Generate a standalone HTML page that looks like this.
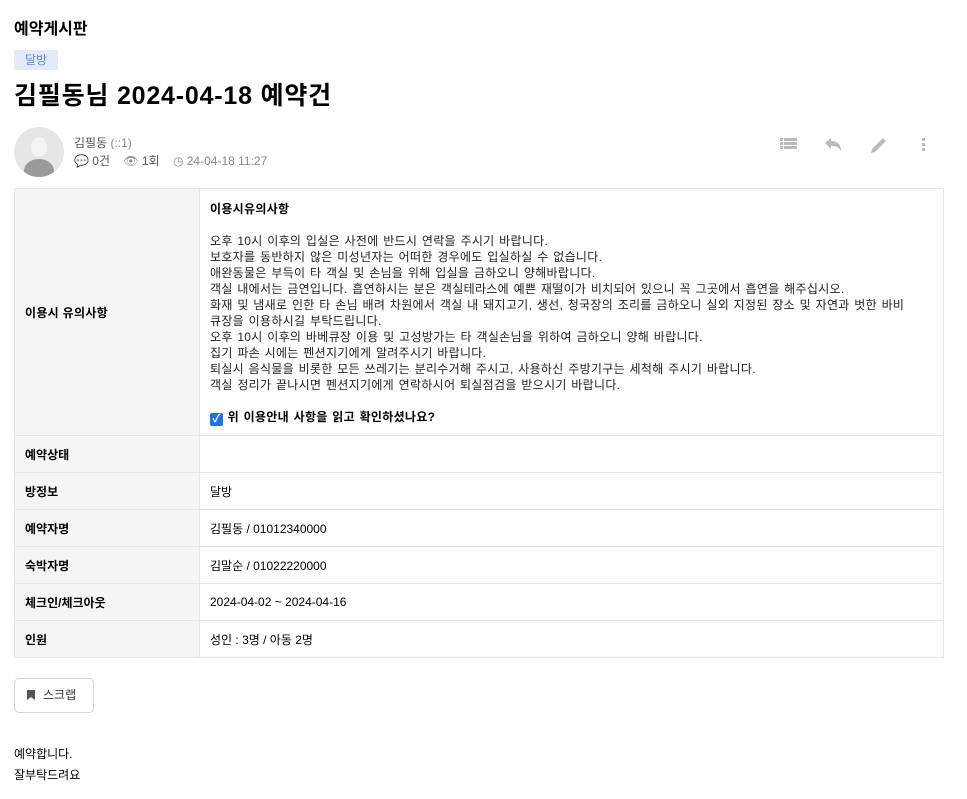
<!DOCTYPE html>
<html><head><meta charset="utf-8"><style>
*{box-sizing:border-box;margin:0;padding:0}
body{width:967px;height:799px;background:#fff;font-family:"Liberation Sans","Noto Sans CJK KR",sans-serif;color:#000;font-size:12px;position:relative;overflow:hidden}
.abs{position:absolute}
table{position:absolute;left:14px;top:188px;width:930px;border-collapse:collapse}
td{border:1px solid #e5e5e5;padding:0 10px;font-size:12px;height:37px}
td.l{background:#f5f5f5;font-weight:bold;width:185px}
.c{line-height:16px;padding:10px 10px 8px 10px;color:#222;letter-spacing:0.3px;word-spacing:1px}
</style></head><body>
<div class="abs" style="left:14px;top:15px;font-size:16px;font-weight:bold">예약게시판</div>
<div class="abs" style="left:14px;top:50px;width:44px;height:20px;background:#e3ebf8;border-radius:3px;color:#5f88d6;font-size:12px;text-align:center;line-height:20px">달방</div>
<div class="abs" style="left:14px;top:76px;font-size:25px;font-weight:bold;letter-spacing:0.8px">김필동님 2024-04-18 예약건</div>
<div class="abs" style="left:14px;top:127px;width:50px;height:50px;border-radius:50%;background:#e6e6e6;overflow:hidden">
<div class="abs" style="left:17px;top:10px;width:16px;height:20px;border-radius:50%;background:#f4f4f4"></div>
<div class="abs" style="left:10px;top:32px;width:30px;height:24px;border-radius:50% 50% 0 0;background:#9a9a9a"></div></div>
<div class="abs" style="left:74px;top:134px;color:#555;font-size:12px">김필동 <span style="color:#888">(::1)</span></div>
<div class="abs" style="left:74px;top:152px;color:#555;font-size:12px">💬 0건 &nbsp;&nbsp;&nbsp;<span style="color:#888">👁</span> 1회 &nbsp;&nbsp;&nbsp;<span style="color:#888">◷ 24-04-18 11:27</span></div>
<svg class="abs" style="left:775px;top:135px" width="160" height="20" fill="#bbb">
<rect x="5" y="3" width="3" height="3"/><rect x="9" y="3" width="13" height="3"/><rect x="5" y="7" width="3" height="3"/><rect x="9" y="7" width="13" height="3"/><rect x="5" y="11" width="3" height="3"/><rect x="9" y="11" width="13" height="3"/>
<path d="M50 8 L56 3 L56 6 C62 6 66 9 66 16 C64 12 61 11 56 11 L56 14 Z"/>
<path d="M97 14 L108 3 L111 6 L100 17 L96 18 Z"/>
<rect x="147" y="3" width="3" height="3"/><rect x="147" y="8" width="3" height="3"/><rect x="147" y="13" width="3" height="3"/>
</svg>
<table>
<tr><td class="l" style="height:247px;letter-spacing:0.3px">이용시 유의사항</td><td class="c"><b style="color:#000">이용시유의사항</b><br><br>오후 10시 이후의 입실은 사전에 반드시 연락을 주시기 바랍니다.<br>보호자를 동반하지 않은 미성년자는 어떠한 경우에도 입실하실 수 없습니다.<br>애완동물은 부득이 타 객실 및 손님을 위해 입실을 금하오니 양해바랍니다.<br>객실 내에서는 금연입니다. 흡연하시는 분은 객실테라스에 예쁜 재떨이가 비치되어 있으니 꼭 그곳에서 흡연을 해주십시오.<br><span style="white-space:nowrap">화재 및 냄새로 인한 타 손님 배려 차원에서 객실 내 돼지고기, 생선, 청국장의 조리를 금하오니 실외 지정된 장소 및 자연과 벗한 바비</span><br>큐장을 이용하시길 부탁드립니다.<br>오후 10시 이후의 바베큐장 이용 및 고성방가는 타 객실손님을 위하여 금하오니 양해 바랍니다.<br>집기 파손 시에는 펜션지기에게 알려주시기 바랍니다.<br>퇴실시 음식물을 비롯한 모든 쓰레기는 분리수거해 주시고, 사용하신 주방기구는 세척해 주시기 바랍니다.<br>객실 정리가 끝나시면 펜션지기에게 연락하시어 퇴실점검을 받으시기 바랍니다.<br><br><b style="color:#000"><span style="display:inline-block;width:13px;height:13px;background:#1a73e8;border-radius:2px;color:#fff;font-size:11px;line-height:13px;text-align:center;vertical-align:-1px">✓</span> 위 이용안내 사항을 읽고 확인하셨나요?</b></td></tr>
<tr><td class="l">예약상태</td><td></td></tr>
<tr><td class="l">방정보</td><td>달방</td></tr>
<tr><td class="l">예약자명</td><td>김필동 / 01012340000</td></tr>
<tr><td class="l">숙박자명</td><td>김말순 / 01022220000</td></tr>
<tr><td class="l">체크인/체크아웃</td><td>2024-04-02 ~ 2024-04-16</td></tr>
<tr><td class="l">인원</td><td>성인 : 3명 / 아동 2명</td></tr>
</table>
<div class="abs" style="left:14px;top:678px;width:80px;height:35px;border:1px solid #d5d5d5;border-radius:5px;font-size:12px;color:#333;line-height:33px;padding-left:12px">
<svg width="8" height="10" style="vertical-align:-1px;margin-right:8px"><path d="M0 0H8V10L4 7L0 10Z" fill="#555"/></svg>스크랩</div>
<div class="abs" style="left:14px;top:744px;font-size:12px;line-height:21px">예약합니다.<br>잘부탁드려요</div>
</body></html>
